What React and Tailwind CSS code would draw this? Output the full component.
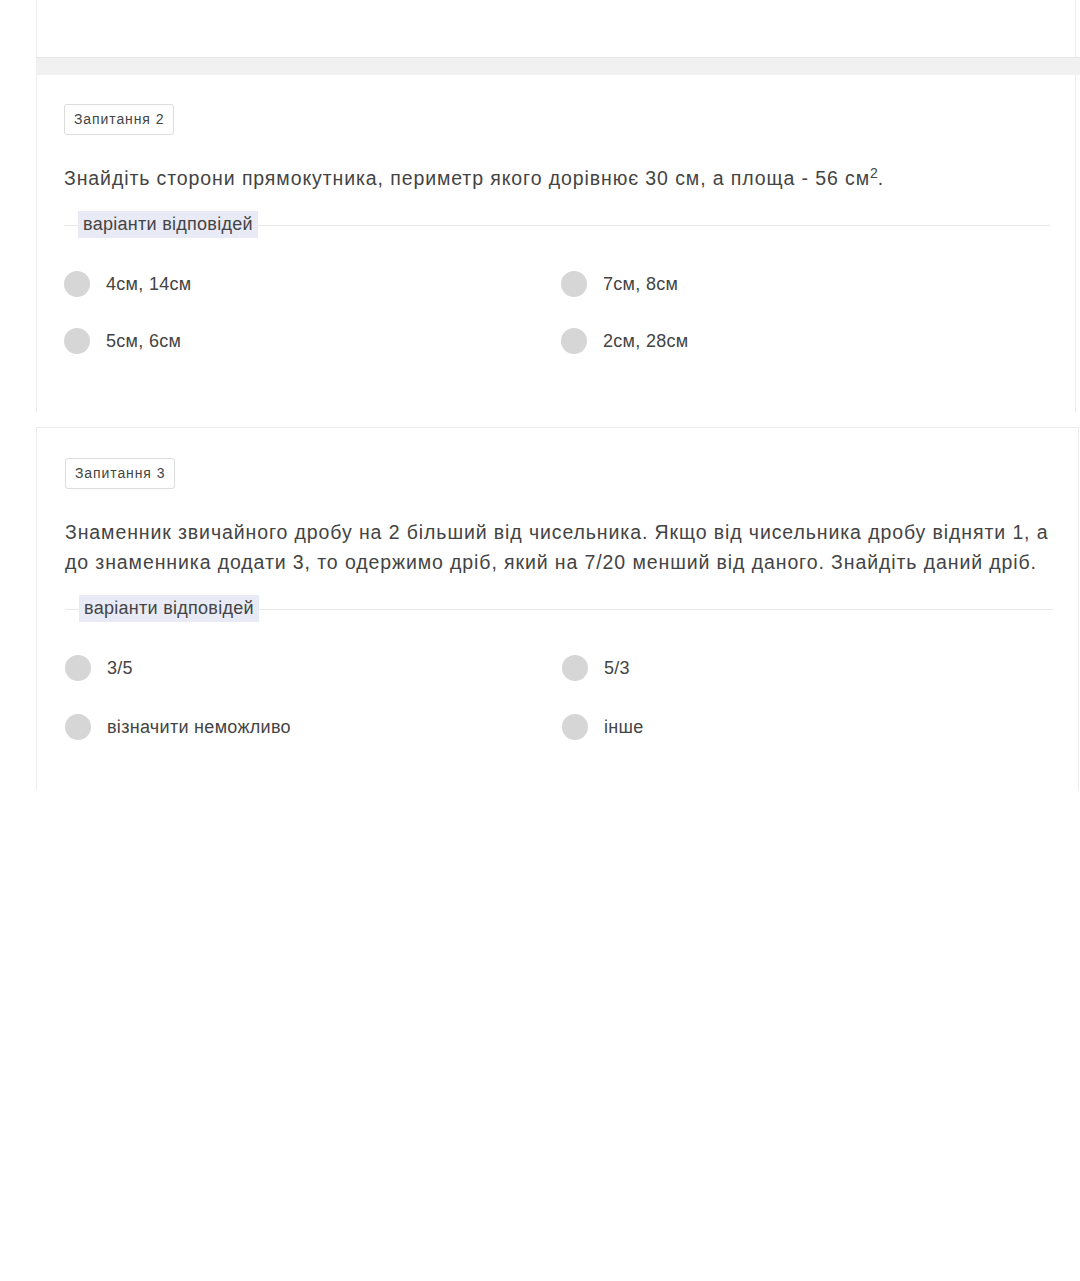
import React from 'react';

const Option = ({ label }) => (
    <div className="flex items-center h-[26px]">
        <span className="w-[26px] h-[26px] rounded-full bg-[#d6d6d6] shrink-0"></span>
        <span className="ml-[16px] text-[18px] text-[#444] tracking-[0.3px]">{label}</span>
    </div>
);

const Legend = () => (
    <div className="relative flex items-center h-[27px]">
        <div className="absolute left-0 right-0 top-1/2 h-px bg-[#e8e8e8]"></div>
        <span className="relative ml-[14px] px-[5px] h-[27px] flex items-center bg-[#e8eaf6] text-[18px] text-[#444] tracking-[0.28px]">
            варіанти відповідей
        </span>
    </div>
);

const Question = ({ num, children, options, className, rowGap }) => (
    <div className={className}>
        <div className="inline-flex items-center h-[31px] px-[9px] border border-[#dcdcdc] rounded-[3px] text-[14px] text-[#444] tracking-[0.9px] bg-white">
            Запитання {num}
        </div>
        <div className="mt-[28px] text-[19.5px] leading-[30px] text-[#444] tracking-[0.9px] pr-[20px]">{children}</div>
        <div className="mt-[18px] pr-[25px]">
            <Legend />
        </div>
        <div className={`mt-[33px] grid grid-cols-[497px_1fr] ${rowGap}`}>
            {options.map((o) => (
                <Option key={o} label={o} />
            ))}
        </div>
    </div>
);

export default function App() {
    return (
        <div className="min-h-[1281px] bg-white" style={{ fontFamily: "'Liberation Sans', Arial, sans-serif" }}>
            <div className="ml-[36px] w-[1040px] h-[57px] bg-white border-l border-r border-[#ececec]"></div>
            <div className="ml-[36px] h-[18px] bg-[#f1f1f1] border-t border-[#e6e6e6]"></div>
            <div className="ml-[36px] w-[1040px] h-[337px] bg-white border-l border-r border-[#ececec] pt-[29px] pl-[27px]">
                <Question
                    num={2}
                    rowGap="gap-y-[31px]"
                    options={['4см, 14см', '7см, 8см', '5см, 6см', '2см, 28см']}
                >
                    Знайдіть сторони прямокутника, периметр якого дорівнює 30 см, а площа - 56 см<sup className="text-[14px] tracking-normal">2</sup>.
                </Question>
            </div>
            <div className="h-[15px]"></div>
            <div className="ml-[36px] w-[1043px] h-[363px] bg-white border-l border-r border-t border-[#ececec] pt-[30px] pl-[28px]">
                <Question
                    num={3}
                    rowGap="gap-y-[33px]"
                    options={['3/5', '5/3', 'візначити неможливо', 'інше']}
                >
                    Знаменник звичайного дробу на 2 більший від чисельника. Якщо від чисельника дробу відняти 1, а до знаменника додати 3, то одержимо дріб, який на 7/20 менший від даного. Знайдіть даний дріб.
                </Question>
            </div>
        </div>
    );
}
